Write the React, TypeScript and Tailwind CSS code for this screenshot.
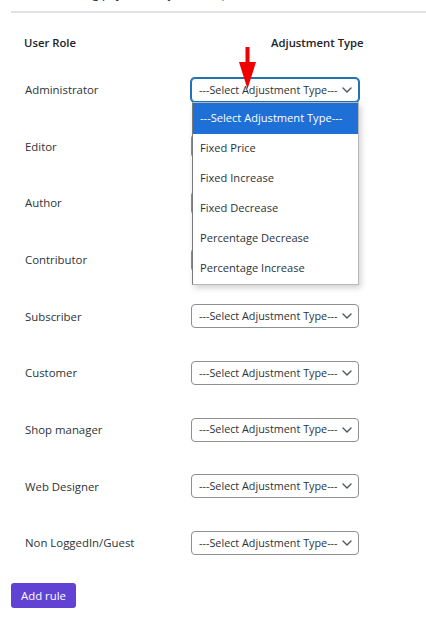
import React from "react";

const roles = [
  "Administrator",
  "Editor",
  "Author",
  "Contributor",
  "Subscriber",
  "Customer",
  "Shop manager",
  "Web Designer",
  "Non LoggedIn/Guest",
];

const options = [
  "Fixed Price",
  "Fixed Increase",
  "Fixed Decrease",
  "Percentage Decrease",
  "Percentage Increase",
];

function Chevron() {
  return (
    <svg width="10" height="6" viewBox="0 0 10 6" className="shrink-0">
      <path d="M1 1 L5 5 L9 1" fill="none" stroke="#50575e" strokeWidth="1.4" strokeLinecap="round" strokeLinejoin="round" />
    </svg>
  );
}

function SelectBox({ focused, covered }: { focused?: boolean; covered?: boolean }) {
  return (
    <div
      className={
        focused
          ? "w-[168px] h-[24px] rounded-[4px] border border-[#2271b1] shadow-[0_0_0_1px_#2271b1] bg-white flex items-center justify-between pl-[7px] pr-[6px] text-[10.8px] text-[#2c3338] whitespace-nowrap"
          : "w-[168px] h-[24px] rounded-[4px] border border-[#8c8f94] bg-white flex items-center justify-between pl-[7px] pr-[6px] text-[10.8px] text-[#2c3338] whitespace-nowrap"
      }
    >
      <span className={covered ? "invisible" : ""}>---Select Adjustment Type---</span>
      <Chevron />
    </div>
  );
}

export default function App() {
  return (
    <div className="relative w-[426px] h-[626px] bg-white overflow-hidden font-['Open_Sans',sans-serif]">
      <div className="h-[4px] overflow-hidden">
        <div className="mt-[-14px] leading-[16px] text-[12px] pl-[60px] whitespace-nowrap text-[#1d2327]">
          Setting payment adjustment <span className="text-[#d63638]">p</span>
        </div>
      </div>
      <div className="ml-[11px] mt-[7px] border-t-2 border-[#e2e2e4]" />

      <div className="pl-[25px]">
        <div className="mt-[20px] h-[20px] flex items-center text-[11.3px] font-semibold text-[#1d2327]">
          <div className="w-[247px] -ml-[1px]">User Role</div>
          <div>Adjustment Type</div>
        </div>

        <div className="mt-[8.4px] flex flex-col">
          {roles.map((r, i) => (
            <div key={r} className="h-[56.65px] flex items-center">
              <div className="w-[166px] text-[11.4px] text-[#2c3338]">{r}</div>
              <div className="relative">
                <SelectBox focused={i === 0} covered={i >= 1 && i <= 3} />
                {i === 0 && (
                  <div className="absolute left-[1px] top-[24px] z-10 w-[167px] bg-white border border-[#b8b8b8] border-l-[#7a7a7a] shadow-[2px_3px_6px_rgba(0,0,0,0.18)] text-[11.1px] text-[#2c3338]">
                    <div className="h-[31px] flex items-center pl-[7px] bg-[#1e6fd6] text-white whitespace-nowrap">
                      ---Select Adjustment Type---
                    </div>
                    {options.map((o) => (
                      <div key={o} className="h-[30px] flex items-center pl-[7px] whitespace-nowrap">
                        {o}
                      </div>
                    ))}
                  </div>
                )}
              </div>
            </div>
          ))}
        </div>
      </div>

      <div className="pl-[11px] mt-[11px]">
        <button className="h-[25px] px-[10px] rounded-[3px] bg-[#6142d4] text-white text-[11.4px] leading-none">
          Add rule
        </button>
      </div>

      <svg
        className="absolute left-[238px] top-[46px] z-20"
        width="20"
        height="46"
        viewBox="0 0 20 46"
      >
        <rect x="7.5" y="1" width="4" height="18" fill="#ee0000" />
        <polygon points="1,16 18,16 9.5,43" fill="#ee0000" />
      </svg>
    </div>
  );
}
